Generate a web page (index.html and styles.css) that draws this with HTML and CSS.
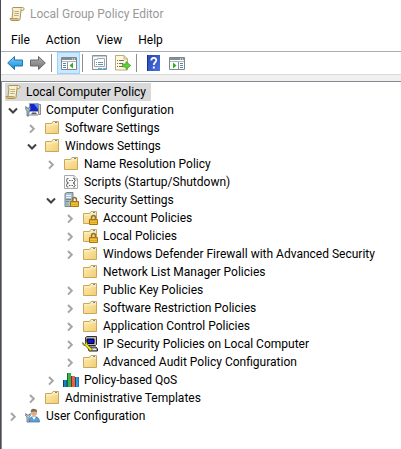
FILE: index.html
```
<!DOCTYPE html>
<html lang="en">
<head>
    <meta charset="UTF-8">
    <meta name="viewport" content="width=device-width, initial-scale=1.0">
    <title>Local Group Policy Editor</title>
    <link rel="stylesheet" href="styles.css">
</head>
<body>
    <!-- Shared icons -->
    <svg class="sprite" aria-hidden="true">
        <defs>
            <linearGradient id="folder-fill" x1="0" y1="0" x2="1" y2="1">
                <stop offset="0" stop-color="#ffedb0"/>
                <stop offset="1" stop-color="#f0cd74"/>
            </linearGradient>
            <linearGradient id="blue-fill" x1="0" y1="0" x2="0" y2="1">
                <stop offset="0" stop-color="#7fd4fa"/>
                <stop offset="1" stop-color="#0b86d8"/>
            </linearGradient>
            <linearGradient id="gray-fill" x1="0" y1="0" x2="0" y2="1">
                <stop offset="0" stop-color="#b4b4b4"/>
                <stop offset="1" stop-color="#707070"/>
            </linearGradient>
            <linearGradient id="help-fill" x1="0" y1="0" x2="1" y2="1">
                <stop offset="0" stop-color="#2546b4"/>
                <stop offset="1" stop-color="#4a72e0"/>
            </linearGradient>
        </defs>
        <symbol id="open" viewBox="0 0 16 16">
            <path d="M4 6.500 8 10.500l4-4" fill="none" stroke="#404040" stroke-width="2"/>
        </symbol>
        <symbol id="closed" viewBox="0 0 16 16">
            <path d="M6 5 9.800 8.800 6 12.600" fill="none" stroke="#a6a6a6" stroke-width="2"/>
        </symbol>
        <symbol id="scroll" viewBox="0 0 16 16">
            <path d="M4 1.500h9.500c1 0 1.500.6 1.500 1.500s-.6 1.500-1.500 1.500H12L11 13c-.2 1.200-1 1.500-2 1.500H3C1.500 14.500 1 13.500 1 12.500h2L4 4C3 3.500 2.800 1.800 4 1.500z" fill="#f8efcd" stroke="#a59461"/>
            <path d="M12 4.500V2.500M3 12.500h6c0 1 .5 2 1.500 1.500" fill="none" stroke="#b5a26b"/>
            <path d="M5.500 5.500h4.500M5.500 7.500h4.500M5 9.500h4.500" stroke="#b9ad88"/>
            <path d="M2 13.500h7" stroke="#e0c368"/>
        </symbol>
        <symbol id="folder" viewBox="0 0 16 16">
            <path d="M1.500 3.500h6l1.500-2h5.500v12h-13z" fill="url(#folder-fill)" stroke="#cba75b"/>
            <path d="M9.500 2.500h4" stroke="#fff"/>
            <path d="M11 2.500h2" stroke="#3e91db"/>
            <path d="M2 5h6.500l1-1H14" fill="none" stroke="#fff3c9"/>
        </symbol>
        <symbol id="lock" viewBox="0 0 16 16">
            <path d="M9.500 10V8c0-3.300 4-3.300 4 0v2" fill="none" stroke="#8c7339" stroke-width="1.500"/>
            <path d="M7.500 9.500h8v5h-8z" fill="#e2a91c" stroke="#a87711"/>
            <path d="M8 11.500h7M8 13.500h7" stroke="#f5cc52" stroke-width=".7"/>
        </symbol>
        <symbol id="computer" viewBox="0 0 16 16">
            <path d="M4.500 1.500h9v8h-9z" fill="#1426c9" stroke="#9aa3ad"/>
            <path d="M9 2h4v5z" fill="#5c8cf2"/>
            <path d="M13.500 2.500h2v10h-2z" fill="#d2d2d2" stroke="#8d8d8d"/>
            <path d="M7 10.500h4l1 2H6z" fill="#55585e"/>
            <path d="M5 13h8" stroke="#a5a9b0" stroke-width="1.500"/>
            <path d="M.8 4.500v3l1.200 1v5.500h2V8.500l1.200-1v-3L4 6H2z" fill="#a9bed1" stroke="#4c6880" stroke-width=".8"/>
        </symbol>
        <symbol id="script" viewBox="0 0 16 16">
            <path d="M1.500 1.500H11L14.500 5v9.500h-13z" fill="#fafafa" stroke="#a9a9a9"/>
            <path d="M11 1.500V5h3.500" fill="#eee" stroke="#a9a9a9"/>
            <path d="M5.500 4.500H4V6L3 6.500l1 .5v1.500h1.500M10 4.500h1.500V6l1 .5-1 .5v1.500H10M5.500 9.500H4V11l-1 .5 1 .5v1h1.500M10 9.500h1.500V11l1 .5-1 .5v1H10" fill="none" stroke="#656565" stroke-width=".9"/>
            <path d="M6 6.500h4M6 11.500h4" stroke="#656565" stroke-dasharray="1 .5"/>
        </symbol>
        <symbol id="server" viewBox="0 0 16 16">
            <path d="M2 1.500 3.500.5H10V12l-1 2.500H2z" fill="#a9bdcb" stroke="#728592"/>
            <path d="M3 3.500h5M3 5.500h5" stroke="#eef6fa"/>
            <path d="M3 7.500h5M3 9.500h3" stroke="#6e8492"/>
            <path d="M3 12h2" stroke="#52c84a"/>
        </symbol>
        <symbol id="ipsec" viewBox="0 0 16 16">
            <path d="M3.500 1.500 5 .5h9.500v8l-1 1h-10z" fill="#b9b9b9" stroke="#303030"/>
            <path d="M5 3h7v4.500H5z" fill="#1010e8" stroke="#000"/>
            <path d="M6 11h8l1.500 2v2H7z" fill="#a6a6a6" stroke="#222"/>
            <path d="M9 13.500h5" stroke="#eee"/>
            <path d="M.8 6.500c-.6 2 .8 3.300 2.500 3l5 5.500 2-1.500-5-5c.5-1.600-.4-2.800-2-3l.5 2-1.300 1z" fill="#ffed17" stroke="#4e4700" stroke-width=".7"/>
        </symbol>
        <symbol id="bars" viewBox="0 0 16 16">
            <path d="M0 8h4v7H0z" fill="#123d61"/>
            <path d="M1 8h2.500v7H1z" fill="#1682c8"/>
            <path d="M4 1h4v14H4z" fill="#156b2c"/>
            <path d="M5 1h3v14H5z" fill="#32b354"/>
            <path d="M8 4h4v11H8z" fill="#8c2a1d"/>
            <path d="M9 4h3v11H9z" fill="#ef5e3e"/>
            <path d="M12 5h4v10h-4z" fill="#134e7a"/>
            <path d="M13 5h2.500v10H13z" fill="#2c9de0"/>
        </symbol>
        <symbol id="user" viewBox="0 0 16 16">
            <path d="M4 14c0-4 2-5.500 5-5.500s5.500 1.500 5.500 5.500z" fill="#5d9fd4" stroke="#3c739f" stroke-width=".7"/>
            <path d="m7 8.500 2 3.500 2-3.500z" fill="#fff"/>
            <circle cx="9" cy="5" r="3" fill="#e0ae82"/>
            <path d="M5.800 4.500C5.500 1.500 7 .7 9.200.9c2.500 0 3.300 1.400 2.800 3.600L11 3.500 7 3.800z" fill="#7d6a55"/>
            <path d="M.8 5.500v2.500l1.200 1V14h2V9l1.200-1V5.500L4 7H2z" fill="#c0d1de" stroke="#4c6880" stroke-width=".8"/>
        </symbol>
        <symbol id="window" viewBox="0 0 16 16">
            <path d="M.5 2.500h15v12H.5z" fill="#fff" stroke="#7d858d"/>
            <path d="M1 3h14v2H1z" fill="#858d95"/>
            <path d="M11 4h1M13 4h1" stroke="#fff"/>
            <path d="M1 6.500h14" stroke="#b0b7bd"/>
        </symbol>
    </svg>

    <main class="window">
        <header class="title-bar">
            <svg class="icon"><use href="#scroll"/></svg>
            <h1>Local Group Policy Editor</h1>
        </header>

        <nav class="menu-bar">
            <button type="button">File</button>
            <button type="button">Action</button>
            <button type="button">View</button>
            <button type="button">Help</button>
        </nav>

        <div class="toolbar" role="toolbar" aria-label="Standard">
            <button type="button" aria-label="Back">
                <svg class="icon" viewBox="0 0 16 16"><path d="M.7 8 7.500 1.500V5H15.500v6H7.500v3.500z" fill="url(#blue-fill)" stroke="#2773a8"/></svg>
            </button>
            <button type="button" aria-label="Forward">
                <svg class="icon" viewBox="0 0 16 16"><path d="M15.300 8 8.500 1.500V5H.5v6h8v3.500z" fill="url(#gray-fill)" stroke="#686868"/></svg>
            </button>
            <span class="divider"></span>
            <button type="button" class="pressed" aria-label="Show/Hide Console Tree" aria-pressed="true">
                <svg class="icon" viewBox="0 0 16 16">
                    <use href="#window"/>
                    <path d="M6.500 7v7" stroke="#8b9399"/>
                    <path d="M2 8.500h3M2 10.500h3M2 12.500h3" stroke="#5285b8"/>
                    <path d="M12 7.500v6l-3.500-3z" fill="#36ad22"/>
                </svg>
            </button>
            <span class="divider"></span>
            <button type="button" aria-label="Properties">
                <svg class="icon" viewBox="0 0 16 16">
                    <path d="M.5.500h14v14H.5z" fill="#f5f7f8" stroke="#8a9299"/>
                    <path d="M1 1.500h13" stroke="#c5cbd0"/>
                    <path d="M2.500 4.500h3v-1h7v8h-10z" fill="#fff" stroke="#a0a9b1"/>
                    <path d="M4 7.500h1M6 7.500h5M4 9.500h1M6 9.500h5" stroke="#6f8ea8"/>
                    <path d="M6 13.500h4M11 13.500h3" stroke="#35bfe9"/>
                </svg>
            </button>
            <button type="button" aria-label="Export List">
                <svg class="icon" viewBox="0 0 16 16">
                    <path d="M.5.500H9L12.500 4v11H.5z" fill="#fff8d9" stroke="#b8ac82"/>
                    <path d="M9 .5V4h3.500" fill="none" stroke="#b8ac82"/>
                    <path d="M2 5.500h1M2 8.500h1M2 11.500h1M4 5.500h5M4 8.500h4M4 11.500h4" stroke="#6d6d78"/>
                    <path d="M7.500 9H11V6.500l4.700 4-4.700 4V12H7.500z" fill="#62cf36" stroke="#3a9c22" stroke-width=".7"/>
                </svg>
            </button>
            <span class="divider"></span>
            <button type="button" aria-label="Help">
                <svg class="icon" viewBox="0 0 16 16">
                    <path d="M1 0h13v16H1z" fill="url(#help-fill)"/>
                    <path d="M1.500 0v16" stroke="#17318c"/>
                    <path d="M5.300 5.500c0-3.600 5-3.300 5-.4C10.300 7.500 7.800 7.300 7.800 10" fill="none" stroke="#fff" stroke-width="1.800"/>
                    <path d="M6.800 11.500h2v2h-2z" fill="#fff"/>
                </svg>
            </button>
            <button type="button" aria-label="Show/Hide Action Pane">
                <svg class="icon" viewBox="0 0 16 16">
                    <use href="#window"/>
                    <path d="M9.500 7v7" stroke="#8b9399"/>
                    <path d="M11 8.500h3M11 10.500h3M11 12.500h3" stroke="#5285b8"/>
                    <path d="M4 7.500v6l3.500-3z" fill="#36ad22"/>
                </svg>
            </button>
        </div>

        <!-- Console tree -->
        <section class="tree">
            <div class="root">
                <svg class="icon"><use href="#scroll"/></svg>
                <span>Local Computer Policy</span>
            </div>
            <ul>
                <li>
                    <div class="row">
                        <button type="button" aria-label="Collapse"><svg class="icon"><use href="#open"/></svg></button>
                        <svg class="icon"><use href="#computer"/></svg>
                        <span>Computer Configuration</span>
                    </div>
                    <ul>
                        <li>
                            <div class="row">
                                <button type="button" aria-label="Expand"><svg class="icon"><use href="#closed"/></svg></button>
                                <svg class="icon"><use href="#folder"/></svg>
                                <span>Software Settings</span>
                            </div>
                        </li>
                        <li>
                            <div class="row">
                                <button type="button" aria-label="Collapse"><svg class="icon"><use href="#open"/></svg></button>
                                <svg class="icon"><use href="#folder"/></svg>
                                <span>Windows Settings</span>
                            </div>
                            <ul>
                                <li>
                                    <div class="row">
                                        <button type="button" aria-label="Expand"><svg class="icon"><use href="#closed"/></svg></button>
                                        <svg class="icon"><use href="#folder"/></svg>
                                        <span>Name Resolution Policy</span>
                                    </div>
                                </li>
                                <li>
                                    <div class="row leaf">
                                        <svg class="icon"><use href="#script"/></svg>
                                        <span>Scripts (Startup/Shutdown)</span>
                                    </div>
                                </li>
                                <li>
                                    <div class="row">
                                        <button type="button" aria-label="Collapse"><svg class="icon"><use href="#open"/></svg></button>
                                        <svg class="icon"><use href="#server"/><use href="#lock"/></svg>
                                        <span>Security Settings</span>
                                    </div>
                                    <ul>
                                        <li>
                                            <div class="row">
                                                <button type="button" aria-label="Expand"><svg class="icon"><use href="#closed"/></svg></button>
                                                <svg class="icon"><use href="#folder"/><use href="#lock"/></svg>
                                                <span>Account Policies</span>
                                            </div>
                                        </li>
                                        <li>
                                            <div class="row">
                                                <button type="button" aria-label="Expand"><svg class="icon"><use href="#closed"/></svg></button>
                                                <svg class="icon"><use href="#folder"/><use href="#lock"/></svg>
                                                <span>Local Policies</span>
                                            </div>
                                        </li>
                                        <li>
                                            <div class="row">
                                                <button type="button" aria-label="Expand"><svg class="icon"><use href="#closed"/></svg></button>
                                                <svg class="icon"><use href="#folder"/></svg>
                                                <span>Windows Defender Firewall with Advanced Security</span>
                                            </div>
                                        </li>
                                        <li>
                                            <div class="row leaf">
                                                <svg class="icon"><use href="#folder"/></svg>
                                                <span>Network List Manager Policies</span>
                                            </div>
                                        </li>
                                        <li>
                                            <div class="row">
                                                <button type="button" aria-label="Expand"><svg class="icon"><use href="#closed"/></svg></button>
                                                <svg class="icon"><use href="#folder"/></svg>
                                                <span>Public Key Policies</span>
                                            </div>
                                        </li>
                                        <li>
                                            <div class="row">
                                                <button type="button" aria-label="Expand"><svg class="icon"><use href="#closed"/></svg></button>
                                                <svg class="icon"><use href="#folder"/></svg>
                                                <span>Software Restriction Policies</span>
                                            </div>
                                        </li>
                                        <li>
                                            <div class="row">
                                                <button type="button" aria-label="Expand"><svg class="icon"><use href="#closed"/></svg></button>
                                                <svg class="icon"><use href="#folder"/></svg>
                                                <span>Application Control Policies</span>
                                            </div>
                                        </li>
                                        <li>
                                            <div class="row">
                                                <button type="button" aria-label="Expand"><svg class="icon"><use href="#closed"/></svg></button>
                                                <svg class="icon"><use href="#ipsec"/></svg>
                                                <span>IP Security Policies on Local Computer</span>
                                            </div>
                                        </li>
                                        <li>
                                            <div class="row">
                                                <button type="button" aria-label="Expand"><svg class="icon"><use href="#closed"/></svg></button>
                                                <svg class="icon"><use href="#folder"/></svg>
                                                <span>Advanced Audit Policy Configuration</span>
                                            </div>
                                        </li>
                                    </ul>
                                </li>
                                <li>
                                    <div class="row">
                                        <button type="button" aria-label="Expand"><svg class="icon"><use href="#closed"/></svg></button>
                                        <svg class="icon"><use href="#bars"/></svg>
                                        <span>Policy-based QoS</span>
                                    </div>
                                </li>
                            </ul>
                        </li>
                        <li>
                            <div class="row">
                                <button type="button" aria-label="Expand"><svg class="icon"><use href="#closed"/></svg></button>
                                <svg class="icon"><use href="#folder"/></svg>
                                <span>Administrative Templates</span>
                            </div>
                        </li>
                    </ul>
                </li>
                <li>
                    <div class="row">
                        <button type="button" aria-label="Expand"><svg class="icon"><use href="#closed"/></svg></button>
                        <svg class="icon"><use href="#user"/></svg>
                        <span>User Configuration</span>
                    </div>
                </li>
            </ul>
        </section>
    </main>
</body>
</html>
```
FILE: styles.css
```
* {
    box-sizing: border-box;
    margin: 0;
    padding: 0;
}
body {
    font-family: 'Segoe UI', Roboto, sans-serif;
    font-size: 12px;
    line-height: 18px;
    color: #000;
    background: #fff;
}
ul {
    list-style: none;
}
button {
    font: inherit;
    color: inherit;
    background: none;
    border: none;
}
.sprite {
    display: block;
    width: 0;
    height: 0;
}
.icon {
    display: block;
    flex: none;
    width: 16px;
    height: 16px;
}
.window {
    display: flex;
    flex-direction: column;
    min-height: 100vh;
    border-left: 1px solid #4b4b50;
}

/* Title and menus */
.title-bar {
    display: flex;
    align-items: center;
    gap: 5px;
    height: 28px;
    padding-left: 8px;
}
.title-bar h1 {
    font-size: 12px;
    font-weight: 400;
    color: #999;
}
.menu-bar {
    display: flex;
    gap: 16px;
    height: 24px;
    padding: 3px 10px;
    border-bottom: 1px solid #a9adb5;
}

/* Toolbar */
.toolbar {
    display: flex;
    align-items: center;
    height: 23px;
    padding-left: 2px;
    border-bottom: 1px solid #d9d9d9;
}
.toolbar button {
    display: flex;
    align-items: center;
    justify-content: center;
    width: 23px;
    height: 22px;
}
.toolbar .pressed {
    background: #cce8ff;
    border: 1px solid #99d1ff;
}
.divider {
    width: 1px;
    height: 18px;
    margin: 0 5px 0 2px;
    background: #8d8d8d;
}

/* Console tree */
.tree {
    flex: 1;
    margin-top: 6px;
    padding: 1px 0 0 3px;
    border-top: 1px solid #828790;
    border-left: 1px solid #828790;
    box-shadow: 0 -6px #f0f0f0;
}
.root,
.row {
    display: flex;
    align-items: center;
    height: 18px;
    white-space: nowrap;
}
.root {
    width: fit-content;
    padding-right: 5px;
    background: #d9d9d9;
}
.root span,
.row span {
    margin-left: 5px;
}
.row button {
    width: 16px;
    height: 16px;
    margin-right: 4px;
}
.leaf {
    padding-left: 20px;
}
.tree ul ul {
    padding-left: 19px;
}
```
